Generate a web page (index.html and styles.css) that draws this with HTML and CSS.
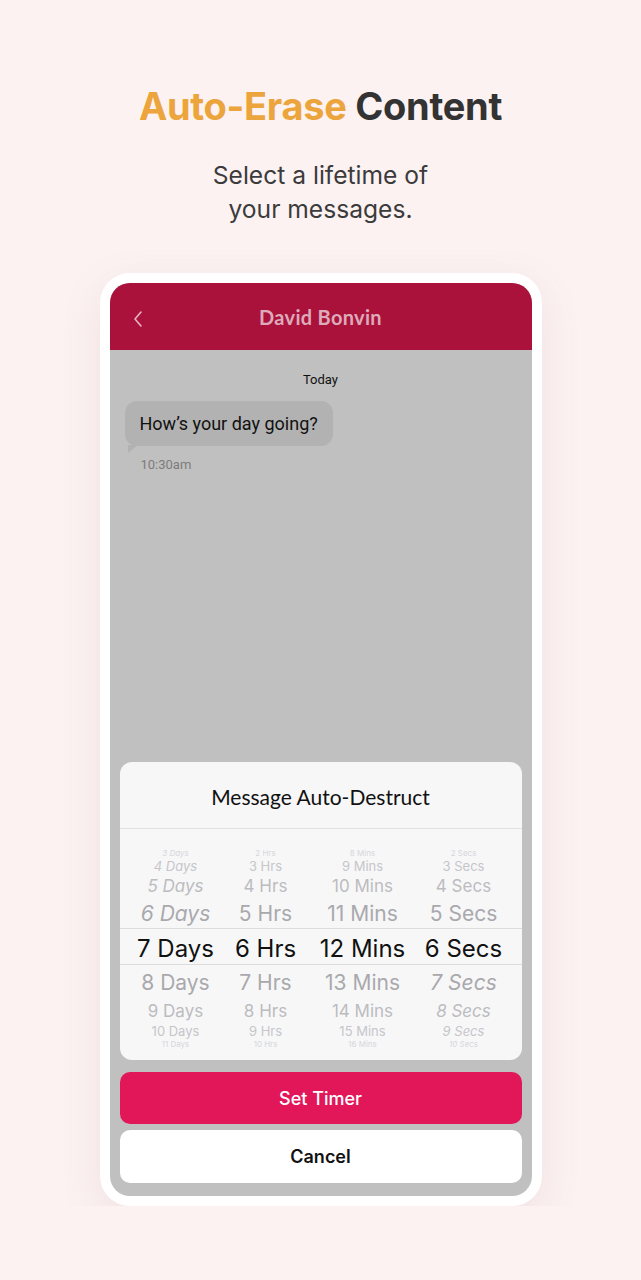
FILE: index.html
```html
<!DOCTYPE html>
<html lang="en">
<head>
  <meta charset="UTF-8">
  <meta name="viewport" content="width=device-width, initial-scale=1.0">
  <title>Auto-Erase Content</title>
  <link rel="stylesheet" href="styles.css">
</head>
<body>
  <div class="hero">
    <h1><span class="accent">Auto-Erase</span> Content</h1>
    <p>Select a lifetime of<br>your messages.</p>
  </div>

  <div class="phone">
    <div class="screen">
      <div class="topbar">
        <svg class="back" width="12" height="18" viewBox="0 0 12 18">
          <polyline points="9,2 3,9 9,16" fill="none" stroke="#e6b3c2" stroke-width="1.6" stroke-linecap="round" stroke-linejoin="round"/>
        </svg>
        <span class="name">David Bonvin</span>
      </div>

      <div class="chat">
        <div class="day">Today</div>
        <div class="bubble">How’s your day going?</div>
        <div class="time">10:30am</div>
      </div>

      <div class="actions">
        <div class="sheet">
          <div class="sheet-title">Message Auto-Destruct</div>
          <div class="picker">
            <div class="selected-band"></div>
            <div class="col">
              <div class="item r4 it">3 Days</div>
              <div class="item r3 it">4 Days</div>
              <div class="item r2 it">5 Days</div>
              <div class="item r1 it">6 Days</div>
              <div class="item r0">7 Days</div>
              <div class="item r1">8 Days</div>
              <div class="item r2">9 Days</div>
              <div class="item r3">10 Days</div>
              <div class="item r4">11 Days</div>
            </div>
            <div class="col">
              <div class="item r4">2 Hrs</div>
              <div class="item r3">3 Hrs</div>
              <div class="item r2">4 Hrs</div>
              <div class="item r1">5 Hrs</div>
              <div class="item r0">6 Hrs</div>
              <div class="item r1">7 Hrs</div>
              <div class="item r2">8 Hrs</div>
              <div class="item r3">9 Hrs</div>
              <div class="item r4">10 Hrs</div>
            </div>
            <div class="col">
              <div class="item r4">8 Mins</div>
              <div class="item r3">9 Mins</div>
              <div class="item r2">10 Mins</div>
              <div class="item r1">11 Mins</div>
              <div class="item r0">12 Mins</div>
              <div class="item r1">13 Mins</div>
              <div class="item r2">14 Mins</div>
              <div class="item r3">15 Mins</div>
              <div class="item r4">16 Mins</div>
            </div>
            <div class="col">
              <div class="item r4">2 Secs</div>
              <div class="item r3">3 Secs</div>
              <div class="item r2">4 Secs</div>
              <div class="item r1">5 Secs</div>
              <div class="item r0">6 Secs</div>
              <div class="item r1 it">7 Secs</div>
              <div class="item r2 it">8 Secs</div>
              <div class="item r3 it">9 Secs</div>
              <div class="item r4 it">10 Secs</div>
            </div>
          </div>
        </div>
        <button class="btn primary" type="button">Set Timer</button>
        <button class="btn" type="button">Cancel</button>
      </div>
    </div>
  </div>
</body>
</html>
```

FILE: styles.css
```css
body {
  margin: 0;
  padding: 0;
  background-color: #fcf2f2;
  font-family: Inter, "Liberation Sans", sans-serif;
}

.hero {
  text-align: center;
  padding-top: 83px;
}

.hero h1 {
  margin: 0;
  font-size: 38px;
  line-height: 46px;
  font-weight: 700;
  color: #333333;
  letter-spacing: -0.3px;
}

.accent {
  color: #eca53c;
}

.hero p {
  margin: 29px 0 0;
  font-size: 24.6px;
  line-height: 34px;
  color: #3b3b3b;
}

.phone {
  width: 422px;
  height: 913px;
  margin: 47px auto 0;
  border: 10px solid #ffffff;
  border-radius: 30px;
  background-color: #ffffff;
  box-shadow: 0 12px 40px rgba(160, 110, 110, 0.12);
}

.screen {
  height: 100%;
  border-radius: 20px;
  overflow: hidden;
  background-color: #c0c0c0;
  display: flex;
  flex-direction: column;
}

.topbar {
  position: relative;
  height: 67px;
  background-color: #ab123b;
  display: flex;
  align-items: center;
  justify-content: center;
}

.back {
  position: absolute;
  left: 22px;
  top: 27px;
}

.name {
  font-family: Lato, "Open Sans", sans-serif;
  font-size: 20px;
  font-weight: 700;
  color: #ddaaba;
  letter-spacing: 0.3px;
}

.chat {
  flex: 1;
  padding: 22px 15px 0;
  font-family: Roboto, "Liberation Sans", sans-serif;
}

.day {
  text-align: center;
  font-size: 13px;
  line-height: 16px;
  color: #111111;
}

.bubble {
  position: relative;
  display: inline-block;
  margin-top: 13px;
  padding: 0 15px;
  height: 45px;
  line-height: 45px;
  border-radius: 12px;
  background-color: #b2b2b2;
  font-size: 18px;
  color: #111111;
}

.bubble::after {
  content: "";
  position: absolute;
  left: 3px;
  bottom: -7px;
  border-right: 10px solid transparent;
  border-top: 8px solid #b2b2b2;
}

.time {
  margin: 11px 0 0 16px;
  font-size: 13px;
  line-height: 16px;
  color: #7c7c7c;
}

.actions {
  padding: 0 10px 13px;
  display: flex;
  flex-direction: column;
}

.sheet {
  background-color: #f7f7f8;
  border-radius: 12px;
  overflow: hidden;
}

.sheet-title {
  height: 66px;
  line-height: 70px;
  text-align: center;
  font-family: Lato, "Open Sans", sans-serif;
  font-size: 21px;
  color: #111111;
  border-bottom: 1px solid #e1e1e3;
}

.picker {
  position: relative;
  display: grid;
  grid-template-columns: 112px 68px 126px 76px;
  padding: 19px 0 11px;
}

.selected-band {
  position: absolute;
  left: 0;
  right: 0;
  top: 99px;
  height: 35px;
  border-top: 1px solid #dcdcde;
  border-bottom: 1px solid #dcdcde;
}

.col {
  display: flex;
  flex-direction: column;
  align-items: center;
}

.item {
  font-family: Inter, "Liberation Sans", sans-serif;
  white-space: nowrap;
}

.item.it {
  font-style: italic;
}

.r0 {
  height: 37px;
  line-height: 37px;
  font-size: 24px;
  color: #111111;
}

.r1 {
  height: 32px;
  line-height: 32px;
  font-size: 21px;
  color: #a9a9ad;
}

.r2 {
  height: 24px;
  line-height: 24px;
  font-size: 17px;
  color: #bcbcc0;
}

.r3 {
  height: 16px;
  line-height: 16px;
  font-size: 13px;
  color: #c6c6ca;
}

.r4 {
  height: 10px;
  line-height: 10px;
  font-size: 8px;
  color: #d6d6da;
}

.btn {
  height: 53px;
  border: none;
  border-radius: 10px;
  background-color: #ffffff;
  font-family: Inter, "Liberation Sans", sans-serif;
  font-size: 18px;
  font-weight: 600;
  color: #111111;
  margin-top: 6px;
}

.btn.primary {
  height: 52px;
  margin-top: 12px;
  background-color: #e2175a;
  color: #ffffff;
  font-weight: 500;
}
```
